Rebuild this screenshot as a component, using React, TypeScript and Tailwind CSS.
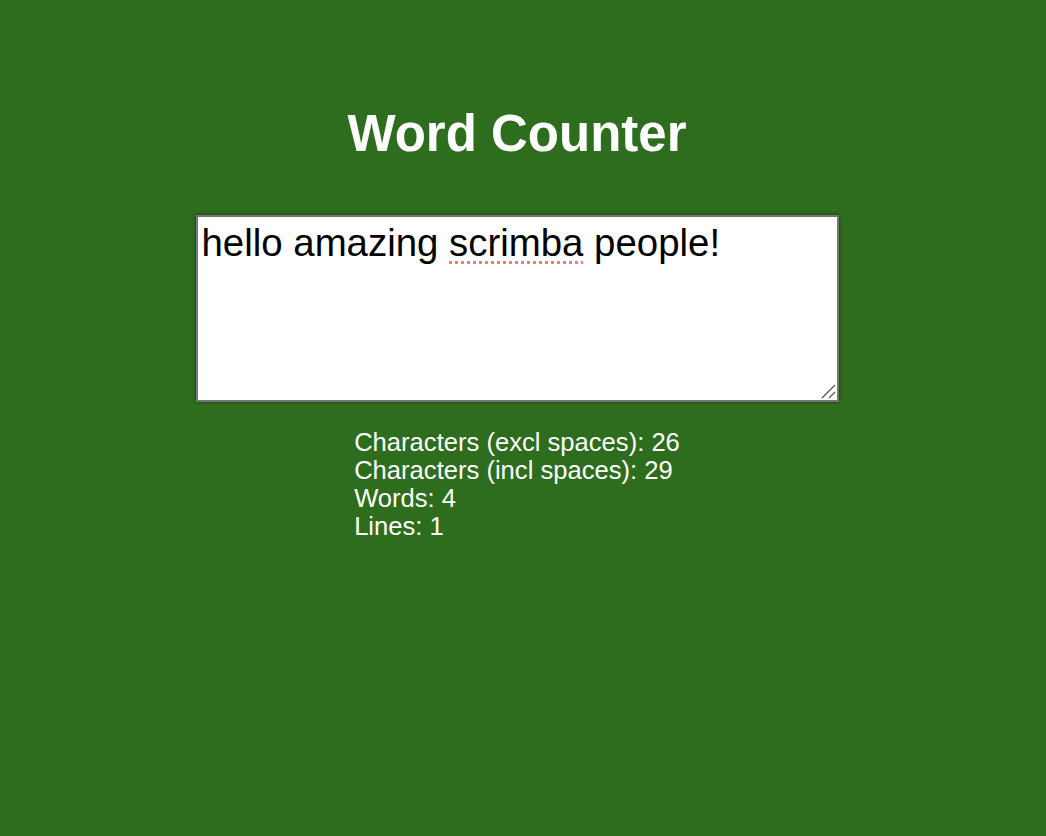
import React, { useState } from 'react';

const App = () => {
  const [text] = useState('hello amazing scrimba people!');

  const charsNoSpaces = text.replace(/\s/g, '').length;
  const charsWithSpaces = text.length;
  const words = text.trim() === '' ? 0 : text.trim().split(/\s+/).length;
  const lines = text === '' ? 0 : text.split('\n').length;

  const parts = text.split('scrimba');

  return (
    <div className="min-h-[836px] bg-[#2e6c1e] font-['Liberation_Sans',Arial,sans-serif] text-white">
      <div className="flex flex-col items-center pt-[105px] pr-[12px]">
        <h1 className="text-[51px] font-bold leading-[57px]">Word Counter</h1>
        <div className="relative mt-[53px]">
          <div
            contentEditable
            suppressContentEditableWarning
            spellCheck={false}
            className="w-[643px] h-[187px] overflow-auto bg-white border-2 border-[#777777] shadow-[0_0_3px_rgba(0,0,0,0.55)] px-[4px] pt-[5px] pb-[3px] text-black text-[38.4px] leading-[42px] outline-none"
          >
            {parts[0]}
            <span className="underline decoration-dotted decoration-[#ee7d7d] decoration-[3px] underline-offset-[5px]">scrimba</span>
            {parts[1]}
          </div>
          <svg className="absolute right-[3px] bottom-[3px]" width="16" height="16" viewBox="0 0 16 16">
            <line x1="2" y1="15" x2="15" y2="2" stroke="#555" strokeWidth="1.3" />
            <line x1="9" y1="15" x2="15" y2="9" stroke="#555" strokeWidth="1.3" />
          </svg>
        </div>
        <div className="mt-[26px] w-fit text-left text-[25.6px] leading-[28px]">
          <p>Characters (excl spaces): {charsNoSpaces}</p>
          <p>Characters (incl spaces): {charsWithSpaces}</p>
          <p>Words: {words}</p>
          <p>Lines: {lines}</p>
        </div>
      </div>
    </div>
  );
};

export default App;
